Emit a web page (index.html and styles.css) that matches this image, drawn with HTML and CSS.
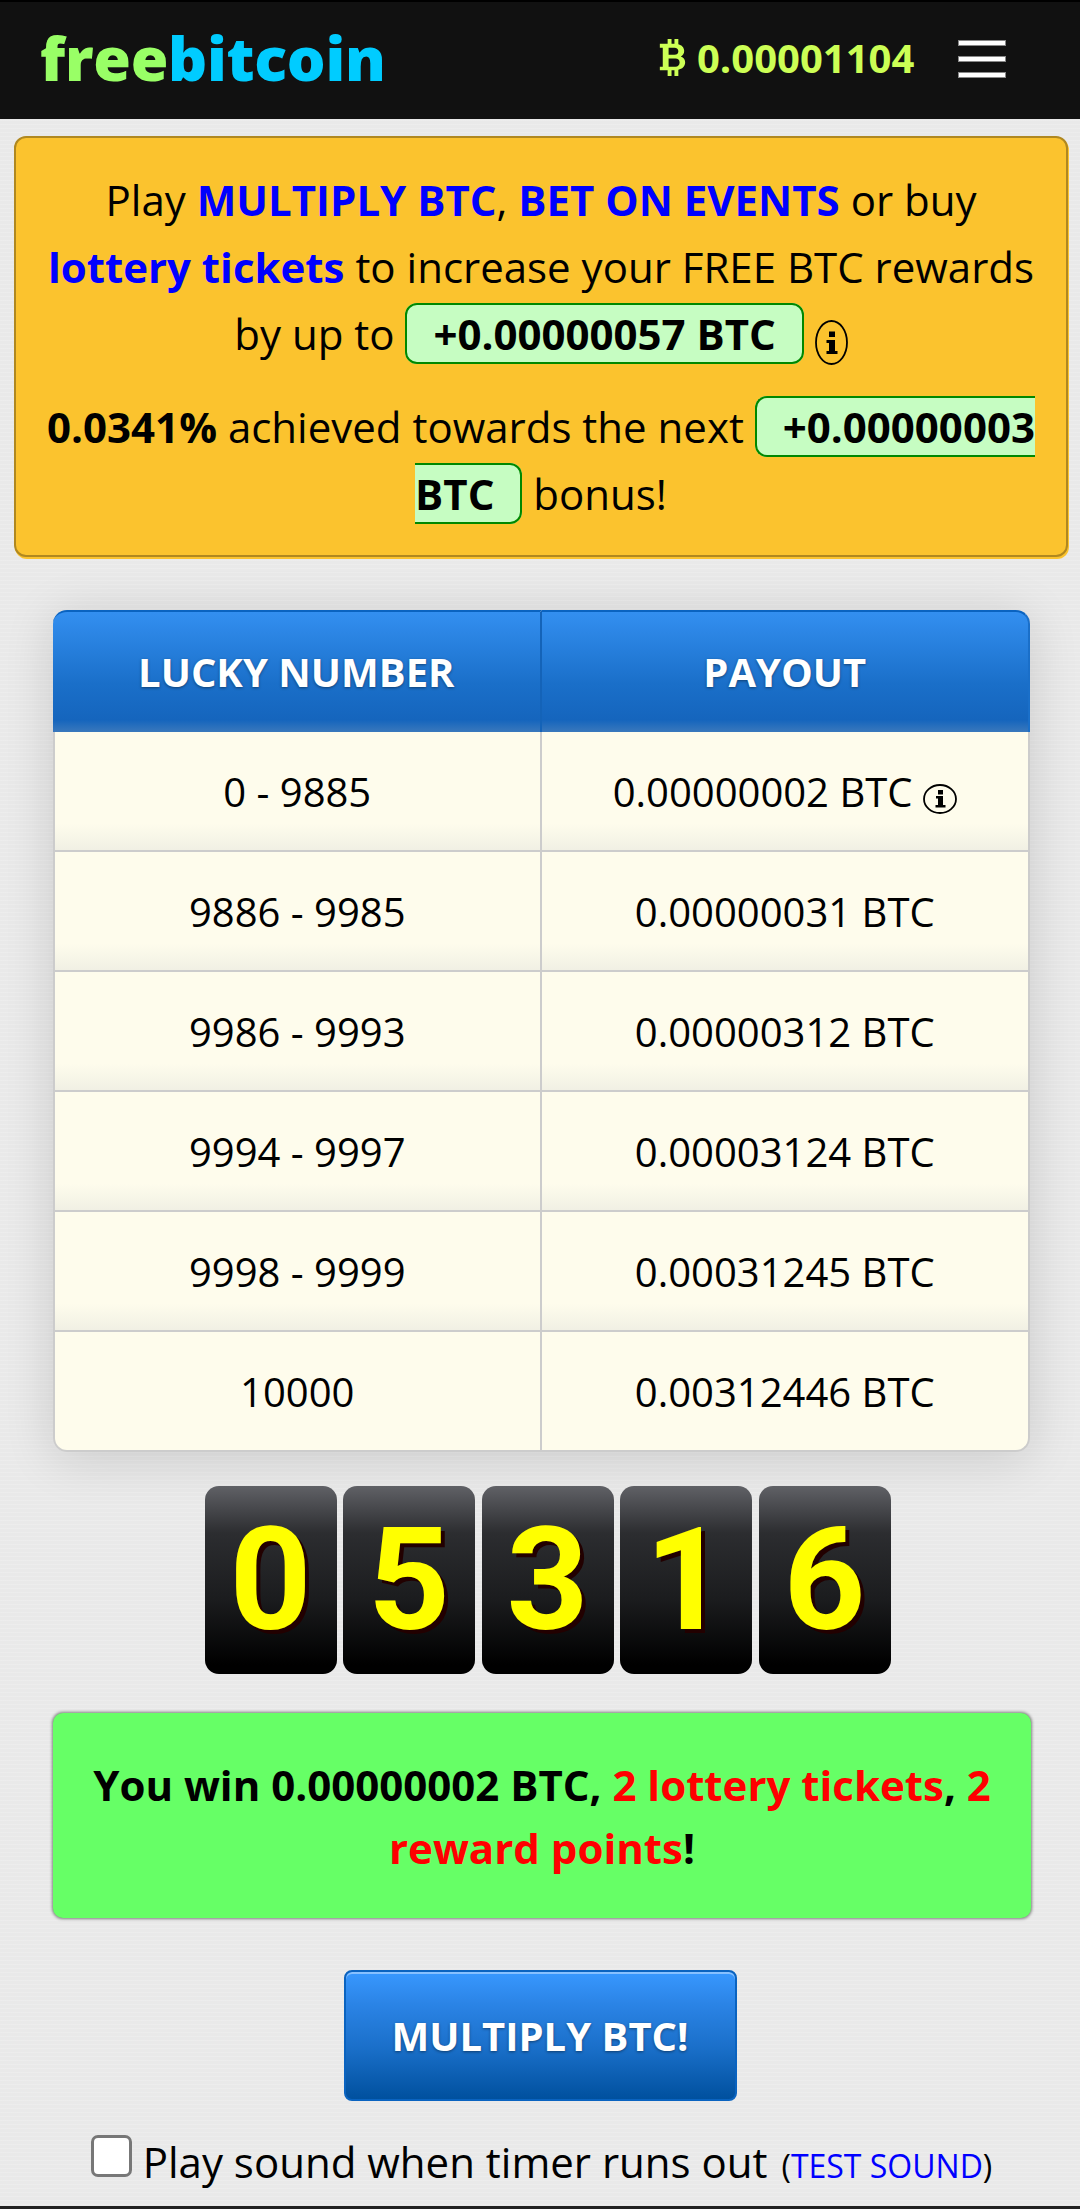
FILE: index.html
```html
<!DOCTYPE html>
<html lang="en">
<head>
<meta charset="utf-8">
<title>freebitcoin</title>
<link rel="stylesheet" href="styles.css">
</head>
<body>
<header class="topbar">
  <div class="logo"><span class="logo-free">free</span><span class="logo-bit">bitcoin</span></div>
  <div class="balance">
    <svg class="btc-icon" viewBox="0 0 26 38" aria-hidden="true"><path fill-rule="evenodd" d="M8 0h4v5h3V0h4v5.400c3.600.9 6 3.400 6 7 0 2.600-1.300 4.500-3.400 5.500 2.900.9 4.400 3.200 4.400 6.100 0 4.300-3 7-7 7.600V38h-4v-6h-3v6H8v-6H0v-3.600h3V9H0V5h8V0zm1 8.900v7.400h6c2.400 0 4-1.400 4-3.700s-1.600-3.700-4-3.700H9zm0 11v8.500h7c2.600 0 4.300-1.600 4.300-4.300s-1.700-4.200-4.300-4.200H9z"/></svg>
    <span>0.00001104</span>
  </div>
  <div class="burger" aria-label="Menu"><i></i><i></i><i></i></div>
</header>

<section class="promo">
  <p class="promo-line">Play <a class="link-strong">MULTIPLY BTC</a>, <a class="link-strong">BET ON EVENTS</a> or buy <a class="link-strong">lottery tickets</a> to increase your FREE BTC rewards by up to <span class="pill">+0.00000057 BTC</span> <svg class="info info-tall" viewBox="0 0 33 45" aria-hidden="true"><ellipse cx="16.500" cy="22.500" rx="15.500" ry="21.500" fill="none" stroke="#000" stroke-width="1.800"/><path d="M14 11.500h6v5.500h-6zM11.500 20h8.500v11h2.500v3H11.500v-3h2.500v-8h-2.500z"/></svg></p>
  <p class="promo-line promo-second"><b>0.0341%</b> achieved towards the next <span class="pill">+0.00000003 BTC</span> bonus!</p>
</section>

<section class="table-wrap">
  <table class="payout">
    <thead>
      <tr><th>LUCKY NUMBER</th><th>PAYOUT</th></tr>
    </thead>
    <tbody>
      <tr><td>0 - 9885</td><td>0.00000002 BTC <svg class="info info-wide" viewBox="0 0 34 30" aria-hidden="true"><ellipse cx="17" cy="15" rx="16" ry="14" fill="none" stroke="#000" stroke-width="1.800"/><path d="M15 6h5v4.500h-5zM13 12h7v9h2.500v2.500H12.500V21h2.500v-6.500h-2z"/></svg></td></tr>
      <tr><td>9886 - 9985</td><td>0.00000031 BTC</td></tr>
      <tr><td>9986 - 9993</td><td>0.00000312 BTC</td></tr>
      <tr><td>9994 - 9997</td><td>0.00003124 BTC</td></tr>
      <tr><td>9998 - 9999</td><td>0.00031245 BTC</td></tr>
      <tr><td>10000</td><td>0.00312446 BTC</td></tr>
    </tbody>
  </table>
</section>

<div class="digits">
  <div class="digit">0</div><div class="digit">5</div><div class="digit">3</div><div class="digit">1</div><div class="digit">6</div>
</div>

<section class="win">
  <b>You win 0.00000002 BTC, <span class="red">2 lottery tickets</span>, <span class="red">2 reward points</span>!</b>
</section>

<div class="cta"><button class="multiply" type="button">MULTIPLY BTC!</button></div>

<div class="sound">
  <span class="check"></span>
  <span class="sound-text">Play sound when timer runs out <small>(<a class="test">TEST SOUND</a>)</small></span>
</div>
<div class="footbar"></div>
</body>
</html>
```

FILE: styles.css
```css
* { box-sizing: border-box; }
html, body { margin: 0; padding: 0; }
body {
  position: relative;
  width: 1080px;
  height: 2209px;
  overflow: hidden;
  background-color: #e9e9e9;
  background-image: repeating-linear-gradient(0deg, rgba(255, 255, 255, .16) 0 1px, transparent 1px 4px);
  color: #000;
  font-family: "Open Sans", "Liberation Sans", sans-serif;
  font-size: 42px;
}
.topbar {
  height: 119px;
  background: #111;
  border-top: 2px solid #000;
  display: flex;
  align-items: center;
  padding: 0 0 0 40px;
}
.logo {
  font-weight: 800;
  font-size: 61px;
  letter-spacing: -.3px;
  line-height: 1;
  margin-top: -7px;
  width: 619px;
}
.logo-free { color: #9f6; }
.logo-bit { color: #0cf; }
.balance {
  display: flex;
  align-items: center;
  gap: 11px;
  width: 299px;
  color: #cf5;
  font-size: 40px;
  font-weight: 700;
  margin-top: -6px;
}
.btc-icon { width: 27px; height: 37px; fill: #cf5; flex: none; }
.burger {
  width: 48px;
  display: flex;
  flex-direction: column;
  gap: 10px;
  margin-top: -4px;
}
.burger i { display: block; height: 6px; background: #fff; box-shadow: 0 0 0 1px #888 inset; }
.promo {
  margin: 17px 12px 0 14px;
  padding: 28px 18px 0;
  height: 421px;
  background: #fbc32e;
  border: 2px solid #b08820;
  border-radius: 12px;
  box-shadow: 1px 2px 0 #fbc32e;
  text-align: center;
}
.promo-line { margin: 0; line-height: 67px; }
.promo-second { margin-top: 26px; }
.link-strong { color: #00f; font-weight: 700; }
.promo b { font-weight: 700; }
.pill {
  background: #c6fdc2;
  border: 2px solid #080;
  border-radius: 12px;
  padding: 0 26px;
  font-weight: 700;
}
.info { vertical-align: middle; }
.info-tall { width: 33px; height: 45px; margin: 0 0 -8px 0; }
.info-wide { width: 34px; height: 30px; margin-bottom: -7px; }
.table-wrap {
  margin: 53px 50px 0 53px;
  border-radius: 14px;
  box-shadow: 0 6px 50px rgba(0, 0, 0, .14);
}
.payout {
  width: 100%;
  border-collapse: separate;
  border-spacing: 0;
  table-layout: fixed;
  font-size: 40px;
}
.payout th {
  height: 122px;
  padding: 0 0 2px;
  color: #fff;
  font-weight: 700;
  font-size: 40px;
  text-shadow: 0 1px 3px rgba(0, 0, 0, .45);
  background: linear-gradient(#338ff0 0, #1a6fc9 60%, #1565bd 90%, #3a78bc 100%);
  border-top: 2px solid #0a63c0;
  border-right: 2px solid #1463b8;
}
.payout th:first-child { border-top-left-radius: 14px; }
.payout th:last-child { border-top-right-radius: 14px; border-right-color: #1a6fc9; }
.payout td {
  height: 120px;
  padding: 0;
  text-align: center;
  background: #fefcec;
  border-bottom: 2px solid #ccc;
  border-right: 2px solid #ccc;
}
.payout td:first-child { border-left: 2px solid #ccc; }
.payout tbody tr:not(:last-child) td { background: linear-gradient(#fefcec 78%, #f1f0e4 100%); }
.payout tbody tr:last-child td:first-child { border-bottom-left-radius: 14px; }
.payout tbody tr:last-child td:last-child { border-bottom-right-radius: 14px; }
.digits {
  display: flex;
  justify-content: center;
  gap: 6.5px;
  margin-top: 34px;
  padding-left: 15px;
}
.digit {
  width: 132px;
  height: 188px;
  border-radius: 14px;
  background: linear-gradient(#606166 0, #2c2d30 25%, #1b1c1e 60%, #000 95%);
  color: #ff0;
  font-family: Roboto, sans-serif;
  font-weight: 700;
  font-size: 143px;
  line-height: 188px;
  text-align: center;
  text-shadow: 4px 4px 0 #200;
}
.win {
  margin: 39px 49px 0 53px;
  height: 205px;
  padding: 0 28px;
  background: #6f6;
  border-radius: 10px;
  box-shadow: 0 0 3px 1px rgba(0, 0, 0, .45);
  display: flex;
  align-items: center;
  justify-content: center;
  text-align: center;
  line-height: 63px;
}
.red { color: #f00; }
.cta { display: flex; justify-content: center; margin-top: 52px; }
.multiply {
  width: 393px;
  height: 131px;
  border: 2px solid #0a63c0;
  border-radius: 8px;
  background: linear-gradient(#3898ff 0, #2b84e6 25%, #1a6fc9 60%, #00509e 100%);
  box-shadow: inset 0 2px 0 rgba(255, 255, 255, .4);
  color: #fff;
  font-family: "Open Sans", sans-serif;
  font-size: 40px;
  font-weight: 700;
  text-shadow: 0 1px 3px rgba(0, 0, 0, .45);
}
.sound {
  display: flex;
  align-items: flex-start;
  justify-content: center;
  margin-top: 34px;
  padding-left: 3px;
  gap: 11px;
}
.check {
  width: 41px;
  height: 42px;
  background: #fff;
  border: 3px solid #777;
  border-radius: 7px;
}
.sound-text { line-height: 54px; white-space: nowrap; }
.sound-text small { font-size: 32px; margin-left: 3px; }
.test { color: #00f; }
.footbar { position: absolute; left: 0; top: 2206px; width: 100%; height: 3px; background: #222; }
```
